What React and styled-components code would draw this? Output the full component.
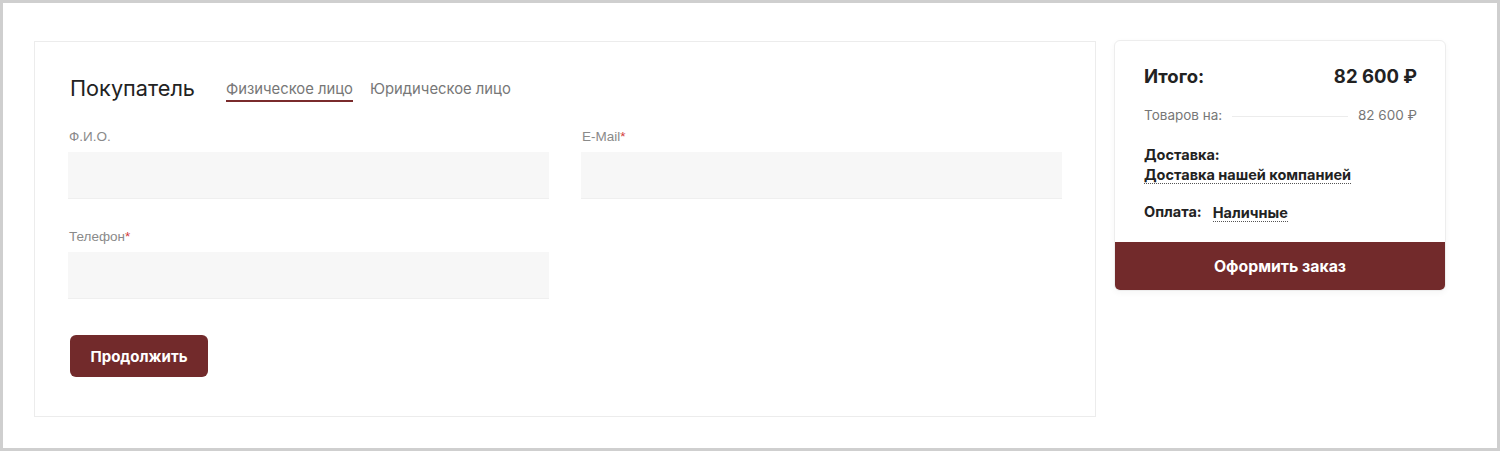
import React from "react";
import styled, { createGlobalStyle } from "styled-components";

const Global = createGlobalStyle`
  html, body { margin: 0; padding: 0; background: #fff; }
  body { font-family: Inter, "Noto Sans", sans-serif; color: #222; }
  * { box-sizing: border-box; }
`;

const Frame = styled.div`
  width: 1500px;
  height: 451px;
  border: 3px solid #cfcfcf;
  padding: 37px 0 0 31px;
  display: flex;
  align-items: flex-start;
  gap: 18px;
`;

const FormCard = styled.section`
  width: 1062px;
  height: 376px;
  margin-top: 1px;
  border: 1px solid #ececec;
  padding: 33px 33px 0 33px;
`;

const Head = styled.div`
  display: flex;
  align-items: flex-end;
  gap: 31px;
  padding-left: 2px;
  height: 32px;
`;

const Title = styled.h2`
  margin: 0 0 6px 0;
  font-size: 21.7px;
  font-weight: 400;
  color: #222;
`;

const Tabs = styled.div`
  display: flex;
  gap: 17px;
  margin-bottom: 5px;
`;

const Tab = styled.span`
  font-size: 14.8px;
  color: #777;
  padding-bottom: 2px;
  border-bottom: 2px solid ${(p) => (p.$active ? "#7a2b2c" : "transparent")};
`;

const Grid = styled.div`
  display: grid;
  grid-template-columns: 481px 481px;
  column-gap: 32px;
  row-gap: 30px;
  margin-top: 22px;
`;

const Field = styled.div`
  display: flex;
  flex-direction: column;
  gap: 8px;
`;

const Label = styled.label`
  font-family: "Liberation Sans", Arial, sans-serif;
  font-size: 13.5px;
  color: #8a8a8a;
  padding-left: 1px;
  height: 15px;
  line-height: 15px;
`;

const Req = styled.span`
  color: #d33b3b;
`;

const Input = styled.div`
  height: 47px;
  background: #f7f7f7;
  border-bottom: 1px solid #efefef;
`;

const Primary = styled.button`
  margin-top: 36px;
  margin-left: 2px;
  height: 42px;
  width: 138px;
  border: none;
  border-radius: 6px;
  background: #722a2b;
  color: #fff;
  font-family: Inter, sans-serif;
  font-weight: 700;
  font-size: 15px;
`;

const Summary = styled.aside`
  width: 332px;
  border: 1px solid #ededed;
  border-radius: 6px;
  background: #fff;
  box-shadow: 0 2px 6px rgba(0, 0, 0, 0.04);
  overflow: hidden;
`;

const SumBody = styled.div`
  padding: 23px 28px 20px 29px;
  display: flex;
  flex-direction: column;
`;

const TotalRow = styled.div`
  display: flex;
  justify-content: space-between;
  align-items: center;
  font-size: 18.5px;
  font-weight: 700;
  color: #222;
  height: 24px;
`;

const LineRow = styled.div`
  display: flex;
  align-items: center;
  gap: 10px;
  height: 16px;
  margin-top: 19px;
  font-size: 13.5px;
  color: #777;
`;

const Dots = styled.span`
  flex: 1;
  border-bottom: 1px solid #ececec;
  margin-top: 2px;
`;

const Block = styled.div`
  margin-top: ${(p) => p.$mt}px;
  font-size: 14.5px;
  font-weight: 700;
  color: #222;
  line-height: 20px;
  display: ${(p) => (p.$inline ? "flex" : "block")};
  align-items: center;
  gap: 11px;
`;

const Dotted = styled.span`
  display: inline-block;
  line-height: 16px;
  margin-top: 2px;
  border-bottom: 1px dotted #555;
`;

const Submit = styled.button`
  display: block;
  width: 100%;
  height: 48px;
  border: none;
  background: #722a2b;
  color: #fff;
  font-family: Inter, sans-serif;
  font-weight: 700;
  font-size: 15.8px;
`;

export default function App() {
  return (
    <>
      <Global />
      <Frame>
        <FormCard>
          <Head>
            <Title>Покупатель</Title>
            <Tabs>
              <Tab $active>Физическое лицо</Tab>
              <Tab>Юридическое лицо</Tab>
            </Tabs>
          </Head>
          <Grid>
            <Field>
              <Label>Ф.И.О.</Label>
              <Input />
            </Field>
            <Field>
              <Label>
                E-Mail<Req>*</Req>
              </Label>
              <Input />
            </Field>
            <Field>
              <Label>
                Телефон<Req>*</Req>
              </Label>
              <Input />
            </Field>
          </Grid>
          <Primary>Продолжить</Primary>
        </FormCard>
        <Summary>
          <SumBody>
            <TotalRow>
              <span>Итого:</span>
              <span>82 600 ₽</span>
            </TotalRow>
            <LineRow>
              <span>Товаров на:</span>
              <Dots />
              <span>82 600 ₽</span>
            </LineRow>
            <Block $mt={22}>
              <div>Доставка:</div>
              <Dotted>Доставка нашей компанией</Dotted>
            </Block>
            <Block $inline $mt={17}>
              <span>Оплата:</span>
              <Dotted>Наличные</Dotted>
            </Block>
          </SumBody>
          <Submit>Оформить заказ</Submit>
        </Summary>
      </Frame>
    </>
  );
}
